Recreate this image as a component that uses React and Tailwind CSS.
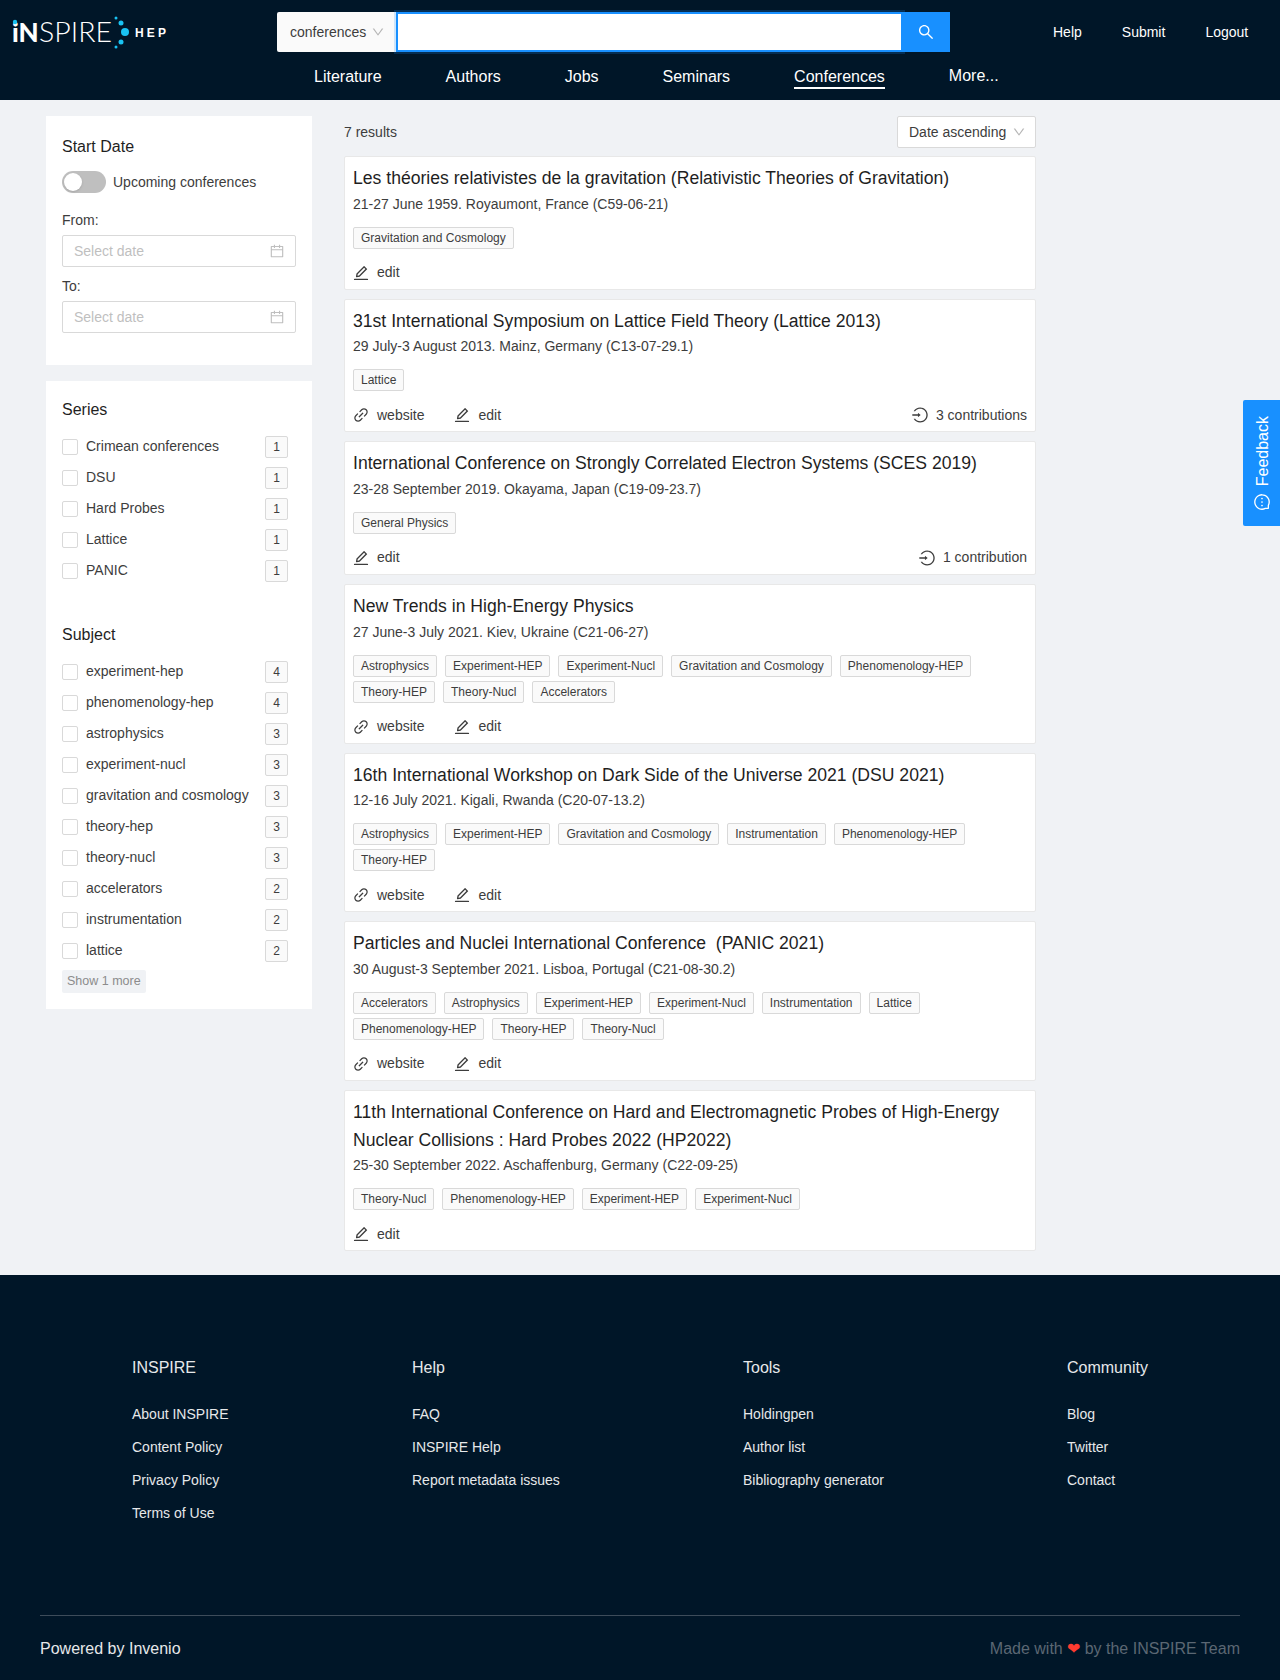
import React from "react";
import {
  AiOutlineSearch,
  AiOutlineDown,
  AiOutlineCalendar,
  AiOutlineLink,
  AiOutlineEdit,
  AiOutlineLogin,
  AiOutlineMessage,
} from "react-icons/ai";

const conferences = [
  {
    title: "Les théories relativistes de la gravitation (Relativistic Theories of Gravitation)",
    info: "21-27 June 1959. Royaumont, France (C59-06-21)",
    tags: ["Gravitation and Cosmology"],
  },
  {
    title: "31st International Symposium on Lattice Field Theory (Lattice 2013)",
    info: "29 July-3 August 2013. Mainz, Germany (C13-07-29.1)",
    tags: ["Lattice"],
    website: true,
    contributions: "3 contributions",
  },
  {
    title: "International Conference on Strongly Correlated Electron Systems (SCES 2019)",
    info: "23-28 September 2019. Okayama, Japan (C19-09-23.7)",
    tags: ["General Physics"],
    contributions: "1 contribution",
  },
  {
    title: "New Trends in High-Energy Physics",
    info: "27 June-3 July 2021. Kiev, Ukraine (C21-06-27)",
    tags: ["Astrophysics", "Experiment-HEP", "Experiment-Nucl", "Gravitation and Cosmology", "Phenomenology-HEP", "Theory-HEP", "Theory-Nucl", "Accelerators"],
    website: true,
  },
  {
    title: "16th International Workshop on Dark Side of the Universe 2021 (DSU 2021)",
    info: "12-16 July 2021. Kigali, Rwanda (C20-07-13.2)",
    tags: ["Astrophysics", "Experiment-HEP", "Gravitation and Cosmology", "Instrumentation", "Phenomenology-HEP", "Theory-HEP"],
    website: true,
  },
  {
    title: "Particles and Nuclei International Conference \u00a0(PANIC 2021)",
    info: "30 August-3 September 2021. Lisboa, Portugal (C21-08-30.2)",
    tags: ["Accelerators", "Astrophysics", "Experiment-HEP", "Experiment-Nucl", "Instrumentation", "Lattice", "Phenomenology-HEP", "Theory-HEP", "Theory-Nucl"],
    website: true,
  },
  {
    title: "11th International Conference on Hard and Electromagnetic Probes of High-Energy Nuclear Collisions : Hard Probes 2022 (HP2022)",
    info: "25-30 September 2022. Aschaffenburg, Germany (C22-09-25)",
    tags: ["Theory-Nucl", "Phenomenology-HEP", "Experiment-HEP", "Experiment-Nucl"],
  },
];

const series = [
  ["Crimean conferences", 1],
  ["DSU", 1],
  ["Hard Probes", 1],
  ["Lattice", 1],
  ["PANIC", 1],
];

const subjects = [
  ["experiment-hep", 4],
  ["phenomenology-hep", 4],
  ["astrophysics", 3],
  ["experiment-nucl", 3],
  ["gravitation and cosmology", 3],
  ["theory-hep", 3],
  ["theory-nucl", 3],
  ["accelerators", 2],
  ["instrumentation", 2],
  ["lattice", 2],
];

const footerColumns = [
  { title: "INSPIRE", width: "w-[280px]", links: ["About INSPIRE", "Content Policy", "Privacy Policy", "Terms of Use"] },
  { title: "Help", width: "w-[331px]", links: ["FAQ", "INSPIRE Help", "Report metadata issues"] },
  { title: "Tools", width: "w-[324px]", links: ["Holdingpen", "Author list", "Bibliography generator"] },
  { title: "Community", width: "w-[100px]", links: ["Blog", "Twitter", "Contact"] },
];

const Logo = () => (
  <svg width="170" height="40" viewBox="0 0 170 40" className="block">
    <text x="12" y="32" fontFamily="Lato, sans-serif" fontSize="26" fontWeight="900" fill="#fff">iN</text>
    <text x="39" y="32" fontFamily="Lato, sans-serif" fontSize="27" fontWeight="300" fill="#fff" textLength="73" lengthAdjust="spacingAndGlyphs">SPIRE</text>
    <circle cx="15" cy="12" r="2.2" fill="#19c3f3" />
    <circle cx="116" cy="8" r="1.5" fill="#19c3f3" />
    <circle cx="121" cy="13" r="2.5" fill="#19c3f3" />
    <circle cx="125" cy="22" r="4" fill="#19c3f3" />
    <circle cx="121" cy="32" r="2.5" fill="#19c3f3" />
    <circle cx="116" cy="37" r="1.5" fill="#19c3f3" />
    <text x="135" y="26.5" fontFamily="'Liberation Sans', sans-serif" fontSize="12" fontWeight="700" fill="#fff" letterSpacing="3.2">HEP</text>
  </svg>
);

const Header = () => (
  <header className="bg-[#001628] h-[100px] text-white relative">
    <div className="flex h-[64px]">
      <div className="w-[277px] pt-[10px]">
        <Logo />
      </div>
      <div className="flex w-[673px] h-[40px] mt-[12px]">
        <div className="w-[119px] bg-[#fafafa] flex items-center justify-between pl-[13px] pr-[11px] text-[14px] text-[#3d3d3d] rounded-l-[2px]">
          conferences
          <AiOutlineDown className="text-[14px] text-[#b5b5b5]" />
        </div>
        <div className="w-[507px] bg-white border-2 border-[#1890ff] shadow-[0_0_0_2px_rgba(24,144,255,0.2)]"></div>
        <div className="w-[47px] bg-[#1890ff] flex items-center justify-center pr-[2px]">
          <AiOutlineSearch className="text-[18px] text-white" />
        </div>
      </div>
      <div className="flex pl-[103px] gap-[40px] text-[14px] pt-[23px] leading-[18px]">
        <span>Help</span>
        <span>Submit</span>
        <span>Logout</span>
      </div>
    </div>
    <nav className="flex pl-[314px] text-[16px] gap-[64px] leading-[22px] mt-[2px]">
      <span>Literature</span>
      <span>Authors</span>
      <span>Jobs</span>
      <span>Seminars</span>
      <span className="border-b-2 border-white h-[23px]">Conferences</span>
      <span className="-mt-[1px]">More...</span>
    </nav>
  </header>
);

const Checkbox = ({ label, count }) => (
  <div className="flex items-center h-[31px] text-[14px] text-[#3d3d3d]">
    <span className="w-[16px] h-[16px] border border-[#d9d9d9] rounded-[2px] bg-white mr-[8px]"></span>
    <span className="flex-1">{label}</span>
    <span className="w-[23px] h-[22px] border border-[#d9d9d9] rounded-[2px] bg-[#fafafa] text-[12px] flex items-center justify-center mr-[8px]">{count}</span>
  </div>
);

const DateInput = () => (
  <div className="h-[32px] border border-[#d9d9d9] rounded-[2px] flex items-center justify-between pl-[11px] pr-[10px] text-[14px] text-[#bfbfbf]">
    Select date
    <AiOutlineCalendar className="text-[16px]" />
  </div>
);

const Sidebar = () => (
  <aside className="w-[266px] shrink-0">
    <div className="bg-white px-[16px] pt-[20px] h-[249px]">
      <h3 className="text-[16px] leading-[22px] text-[#1f1f1f]">Start Date</h3>
      <div className="flex items-center mt-[13px]">
        <span className="w-[44px] h-[22px] rounded-full bg-[#bfbfbf] p-[2px]">
          <span className="block w-[18px] h-[18px] rounded-full bg-white shadow-sm"></span>
        </span>
        <span className="ml-[7px] text-[14px] text-[#3d3d3d]">Upcoming conferences</span>
      </div>
      <div className="text-[14px] leading-[22px] text-[#3d3d3d] mt-[16px] mb-[4px]">From:</div>
      <DateInput />
      <div className="text-[14px] leading-[22px] text-[#3d3d3d] mt-[8px] mb-[4px]">To:</div>
      <DateInput />
    </div>
    <div className="bg-white px-[16px] mt-[16px] h-[628px] pt-[18px]">
      <h3 className="text-[16px] leading-[22px] text-[#1f1f1f] mb-[10px]">Series</h3>
      {series.map(([label, count]) => (
        <Checkbox key={label} label={label} count={count} />
      ))}
      <h3 className="text-[16px] leading-[22px] text-[#1f1f1f] mt-[38px] mb-[10px]">Subject</h3>
      {subjects.map(([label, count]) => (
        <Checkbox key={label} label={label} count={count} />
      ))}
      <span className="inline-block mt-[4px] bg-[#f0f2f5] text-[#8c8c8c] text-[12.5px] leading-[23px] px-[5px] rounded-[2px]">Show 1 more</span>
    </div>
  </aside>
);

const ConferenceCard = ({ item }) => (
  <div className="bg-white border border-[#e8e8e8] rounded-[2px] pt-[8px] px-[8px] pb-[5px] mb-[9px]">
    <div className="text-[17.6px] leading-[27.66px] text-[#1f1f1f]">{item.title}</div>
    <div className="text-[14px] leading-[22px] text-[#3d3d3d]">{item.info}</div>
    <div className="flex flex-wrap gap-x-[8px] gap-y-[4px] mt-[12px]">
      {item.tags.map((tag) => (
        <span key={tag} className="h-[22px] border border-[#d9d9d9] rounded-[2px] bg-[#fafafa] px-[7px] text-[12px] leading-[20px] text-[#3d3d3d]">{tag}</span>
      ))}
    </div>
    <div className="flex items-center justify-between mt-[13px] h-[22px] text-[14px] text-[#3d3d3d]">
      <div className="flex items-center gap-[30px]">
        {item.website && (
          <span className="flex items-center gap-[7px]">
            <AiOutlineLink className="text-[18px] -ml-[1px]" />
            website
          </span>
        )}
        <span className="flex items-center gap-[7px]">
          <AiOutlineEdit className="text-[18px] -ml-[1px]" />
          edit
        </span>
      </div>
      {item.contributions && (
        <span className="flex items-center gap-[7px]">
          <AiOutlineLogin className="text-[18px]" />
          {item.contributions}
        </span>
      )}
    </div>
  </div>
);

const Results = () => (
  <section className="w-[692px] ml-[32px]">
    <div className="flex items-center justify-between h-[32px] mb-[8px] text-[14px] text-[#3d3d3d]">
      <span>7 results</span>
      <div className="w-[139px] h-[32px] bg-white border border-[#d9d9d9] rounded-[2px] flex items-center justify-between pl-[11px] pr-[9px]">
        Date ascending
        <AiOutlineDown className="text-[14px] text-[#b5b5b5]" />
      </div>
    </div>
    {conferences.map((item) => (
      <ConferenceCard key={item.info} item={item} />
    ))}
  </section>
);

const Footer = () => (
  <footer className="bg-[#001628] h-[408px] mt-[15px] px-[40px] pt-[82px] text-[14px] text-[#e6e8ea]">
    <div className="flex pl-[92px] h-[258px]">
      {footerColumns.map((col) => (
        <div key={col.title} className={col.width}>
          <div className="text-[16px] leading-[22px] mb-[19px]">{col.title}</div>
          {col.links.map((link) => (
            <div key={link} className="h-[33px] leading-[33px] whitespace-nowrap">{link}</div>
          ))}
        </div>
      ))}
    </div>
    <div className="border-t border-[#3d4c5a] flex justify-between pt-[22px] text-[16px] leading-[22px]">
      <span>Powered by Invenio</span>
      <span className="text-[#5b6773]">
        Made with <span className="text-[#ff3b30]">❤</span> by the INSPIRE Team
      </span>
    </div>
  </footer>
);

const Feedback = () => (
  <div className="absolute right-0 top-[400px] w-[37px] h-[126px] bg-[#1890ff] rounded-l-[2px] flex flex-col items-center justify-center gap-[7px] text-white text-[16px] pt-[1px]">
    <span className="[writing-mode:vertical-rl] rotate-180 leading-[22px] ml-[3px]">Feedback</span>
    <AiOutlineMessage className="text-[18px] -rotate-90" />
  </div>
);

export default function App() {
  return (
    <div className="relative bg-[#f0f2f5] font-['Liberation_Sans',Arial,sans-serif] min-h-[1680px]">
      <Header />
      <main className="flex pl-[46px] pt-[16px]">
        <Sidebar />
        <Results />
      </main>
      <Footer />
      <Feedback />
    </div>
  );
}
